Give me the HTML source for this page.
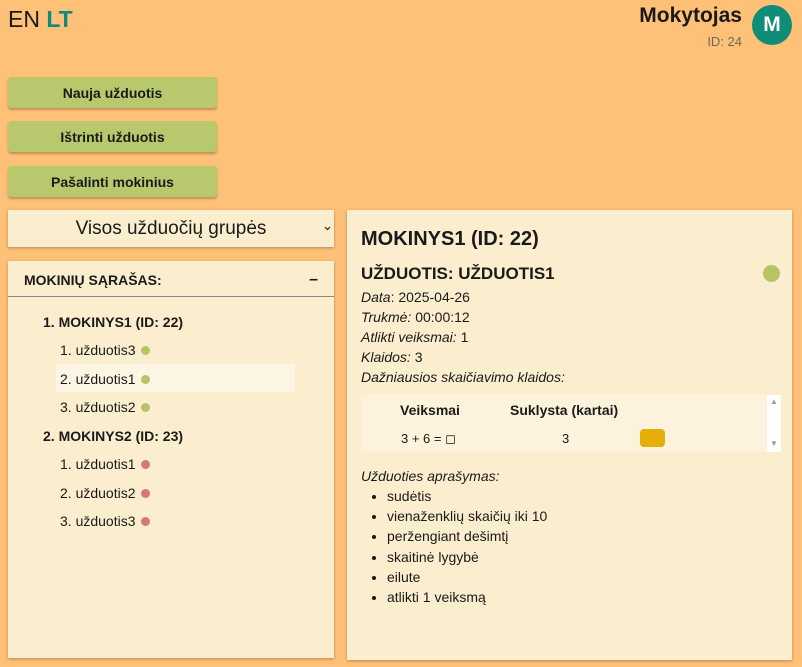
<!DOCTYPE html>
<html><head><meta charset="utf-8"><style>
*{margin:0;padding:0;box-sizing:border-box}
body{width:802px;height:667px;background:#ffc077;font-family:"Liberation Sans","DejaVu Sans",sans-serif;color:#1a1a1a;position:relative;overflow:hidden}
.a{position:absolute}
.btn{position:absolute;left:8px;width:209px;height:31px;background:#b8c96d;border-radius:3px;box-shadow:0 2px 2px rgba(0,0,0,.25);font-weight:bold;font-size:14px;text-align:center;line-height:32px}
.panel{position:absolute;background:#fbeecf;box-shadow:0 1px 3px rgba(0,0,0,.3)}
.dot{display:inline-block;width:9px;height:9px;border-radius:50%;margin-left:5px;vertical-align:0px}
.g{background:#b5c566}.r{background:#d67878}
.li{position:absolute;font-size:14px}
.info{position:absolute;left:361px;font-size:14px}
i{font-style:italic}
</style></head><body>
<div class="a" style="left:8px;top:6px;font-size:23px">EN <span style="color:#108a7c;font-weight:bold">LT</span></div>
<div class="a" style="right:60px;top:4px;font-size:21px;font-weight:bold">Mokytojas</div>
<div class="a" style="right:60px;top:34px;font-size:13px;color:#6b6b5a">ID: 24</div>
<div class="a" style="left:752px;top:5px;width:40px;height:40px;border-radius:50%;background:#0f8d77;color:#fff;font-size:21px;font-weight:bold;text-align:center;line-height:40px">M</div>
<div class="btn" style="top:77px">Nauja užduotis</div>
<div class="btn" style="top:121px">Ištrinti užduotis</div>
<div class="btn" style="top:166px">Pašalinti mokinius</div>
<div class="panel" style="left:8px;top:210px;width:326px;height:37px;font-size:19px;text-align:center;line-height:38px">Visos užduočių grupės<svg class="a" style="right:3px;top:16px" width="7" height="5" viewBox="0 0 7 5"><path d="M1 1L3.5 3.5L6 1" stroke="#222" stroke-width="1.2" fill="none"/></svg></div>
<div class="panel" style="left:8px;top:261px;width:326px;height:397px">
<div style="height:36px;border-bottom:1px solid #888;font-weight:bold;font-size:14px;line-height:38px;padding-left:16px">MOKINIŲ SĄRAŠAS:<span style="position:absolute;right:16px;font-size:16px">–</span></div>
<div class="a" style="left:48px;top:103px;width:239px;height:28px;background:#fdf6e5"></div>
<div class="li" style="left:35px;top:53px;font-weight:bold">1. MOKINYS1 (ID: 22)</div>
<div class="li" style="left:52px;top:81px">1. užduotis3<span class="dot g"></span></div>
<div class="li" style="left:52px;top:110px">2. užduotis1<span class="dot g"></span></div>
<div class="li" style="left:52px;top:138px">3. užduotis2<span class="dot g"></span></div>
<div class="li" style="left:35px;top:167px;font-weight:bold">2. MOKINYS2 (ID: 23)</div>
<div class="li" style="left:52px;top:195px">1. užduotis1<span class="dot r"></span></div>
<div class="li" style="left:52px;top:224px">2. užduotis2<span class="dot r"></span></div>
<div class="li" style="left:52px;top:252px">3. užduotis3<span class="dot r"></span></div>
</div>
<div class="panel" style="left:347px;top:210px;width:445px;height:450px"></div>
<div class="a" style="left:361px;top:228px;font-size:20px;font-weight:bold">MOKINYS1 (ID: 22)</div>
<div class="a" style="left:361px;top:264px;font-size:17px;font-weight:bold">UŽDUOTIS: UŽDUOTIS1</div>
<div class="a" style="left:763px;top:265px;width:17px;height:17px;border-radius:50%;background:#b5c566"></div>
<div class="info" style="top:289px"><i>Data</i>: 2025-04-26</div>
<div class="info" style="top:309px"><i>Trukmė:</i> 00:00:12</div>
<div class="info" style="top:329px"><i>Atlikti veiksmai:</i> 1</div>
<div class="info" style="top:349px"><i>Klaidos:</i> 3</div>
<div class="info" style="top:369px"><i>Dažniausios skaičiavimo klaidos:</i></div>
<div class="a" style="left:361px;top:395px;width:420px;height:57px;background:#fdf3dc"></div>
<div class="a" style="left:767px;top:395px;width:14px;height:57px;background:#fff;color:#999;font-size:8px;text-align:center;line-height:14px">▲<br><br><br>▼</div>
<div class="a" style="left:400px;top:402px;font-size:14px;font-weight:bold">Veiksmai</div>
<div class="a" style="left:510px;top:402px;font-size:14px;font-weight:bold">Suklysta (kartai)</div>
<div class="a" style="left:401px;top:431px;font-size:13px">3 + 6 = ◻</div>
<div class="a" style="left:562px;top:431px;font-size:13px">3</div>
<div class="a" style="left:640px;top:429px;width:25px;height:18px;border-radius:4px;background:#e5ae0a"></div>
<div class="info" style="top:468px"><i>Užduoties aprašymas:</i></div>
<ul class="a" style="left:387px;top:486px;font-size:14px;line-height:20.2px">
<li>sudėtis</li><li>vienaženklių skaičių iki 10</li><li>peržengiant dešimtį</li><li>skaitinė lygybė</li><li>eilute</li><li>atlikti 1 veiksmą</li></ul>
</body></html>
